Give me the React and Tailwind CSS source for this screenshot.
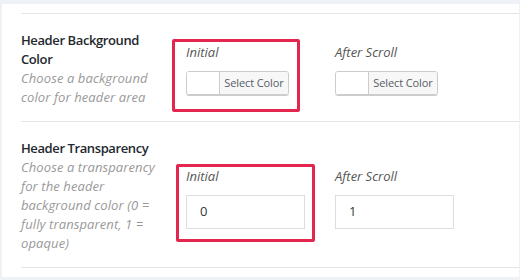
import React from 'react';

const ColorPicker = () => (
    <div className="flex h-[24px] w-[103px] rounded-[3px] border border-[#cccccc] shadow-[0_1px_0_#cccccc] overflow-hidden">
        <div className="w-[32px] bg-white" />
        <div className="flex-1 flex items-center justify-center bg-[#f7f7f7] border-l border-[#cccccc] text-[11px] tracking-[-0.1px] text-[#555d66] whitespace-nowrap">
            Select Color
        </div>
    </div>
);

const NumberInput = ({ value }) => (
    <div className="flex items-center h-[34px] w-[119px] border border-[#dddddd] pl-[13px] text-[13px] text-[#32373c] bg-white">
        {value}
    </div>
);

const Field = ({ label, children, highlight }) => (
    <div className="relative w-[149px]">
        <p className="italic text-[13px] leading-[19px] text-[#555555]">{label}</p>
        <div className="mt-[9px]">{children}</div>
        {highlight}
    </div>
);

const App = () => {
    return (
        <div className="h-[280px] w-[520px] bg-[#eef2f7] pt-[4px] pl-[2px] pr-[1px] pb-[3px]" style={{ fontFamily: '"Open Sans", sans-serif' }}>
            <div className="h-full bg-white pl-[19px] pt-[9px]">
                {/* background color row */}
                <div className="flex border-t border-[#e5e5e5] pt-[17px] pb-[14px]">
                    <div className="w-[165px] pr-[28px]">
                        <h3 className="text-[13px] leading-[19px] font-semibold tracking-[-0.4px] text-[#23282d]">Header Background Color</h3>
                        <p className="italic text-[13px] leading-[19px] tracking-[0.1px] text-[#999999]">Choose a background color for header area</p>
                    </div>
                    <div className="flex mt-[12px]">
                        <Field
                            label="Initial"
                            highlight={<div className="absolute left-[-14px] top-[-4px] w-[128px] h-[73px] border-[3px] border-[#e2264d] rounded-[2px]" />}
                        >
                            <ColorPicker />
                        </Field>
                        <Field label="After Scroll">
                            <ColorPicker />
                        </Field>
                    </div>
                </div>

                {/* transparency row */}
                <div className="flex border-t border-b border-[#e5e5e5] pt-[17px] pb-[14px]">
                    <div className="w-[165px] pr-[28px]">
                        <h3 className="text-[13px] leading-[19px] font-semibold tracking-[-0.4px] text-[#23282d]">Header Transparency</h3>
                        <p className="italic text-[13px] leading-[19px] tracking-[0.1px] text-[#999999]">Choose a transparency for the header background color (0 = fully transparent, 1 = opaque)</p>
                    </div>
                    <div className="flex mt-[28px]">
                        <Field
                            label="Initial"
                            highlight={<div className="absolute left-[-10px] top-[-3px] w-[139px] h-[78px] border-[3px] border-[#e2264d] rounded-[2px]" />}
                        >
                            <NumberInput value="0" />
                        </Field>
                        <Field label="After Scroll">
                            <NumberInput value="1" />
                        </Field>
                    </div>
                </div>
            </div>
        </div>
    );
};

export default App;
